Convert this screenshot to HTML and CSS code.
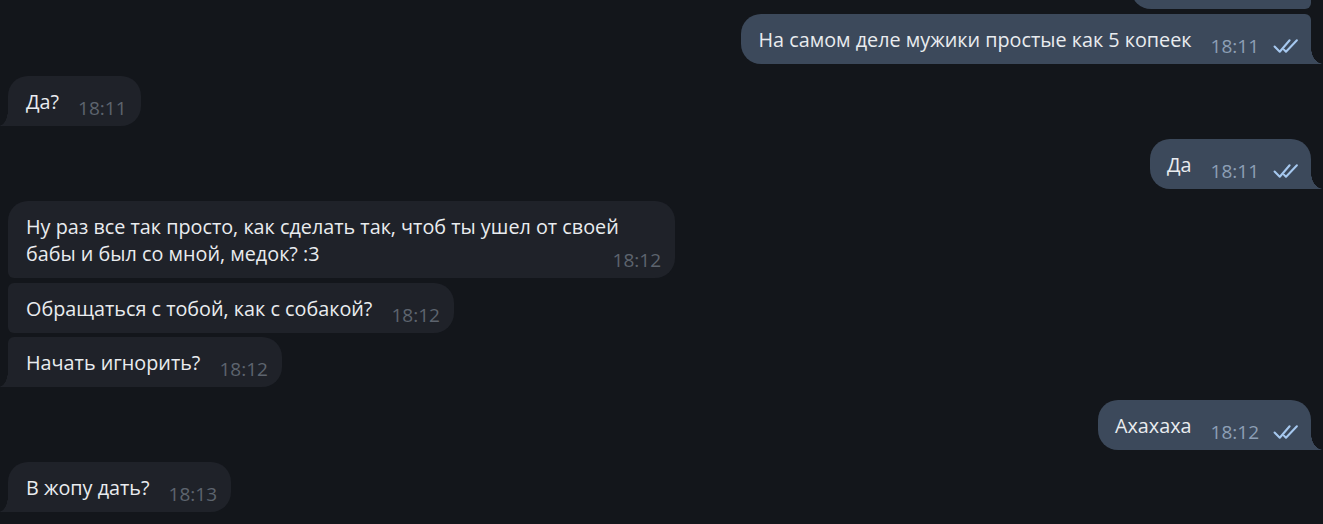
FILE: index.html
```html
<!DOCTYPE html>
<html lang="ru">
<head>
<meta charset="utf-8">
<title>Чат</title>
<link rel="stylesheet" href="styles.css">
</head>
<body>
<div class="chat">
  <div class="group out">
    <div class="bubble cut"></div>
    <div class="bubble"><span class="text">На самом деле мужики простые как 5 копеек</span><span class="meta"><span class="time">18:11</span><svg class="check" viewBox="0 0 26 15"><path d="M1.5 8 L6.5 13 L16 2"/><path d="M10.5 11 L12.5 13 L23 2"/></svg></span></div>
  </div>
  <div class="group in">
    <div class="bubble"><span class="text">Да?</span><span class="meta"><span class="time">18:11</span></span></div>
  </div>
  <div class="group out">
    <div class="bubble"><span class="text">Да</span><span class="meta"><span class="time">18:11</span><svg class="check" viewBox="0 0 26 15"><path d="M1.5 8 L6.5 13 L16 2"/><path d="M10.5 11 L12.5 13 L23 2"/></svg></span></div>
  </div>
  <div class="group in">
    <div class="bubble"><span class="text">Ну раз все так просто, как сделать так, чтоб ты ушел от своей бабы и был со мной, медок? :3</span><span class="meta"><span class="time">18:12</span></span></div>
    <div class="bubble"><span class="text">Обращаться с тобой, как с собакой?</span><span class="meta"><span class="time">18:12</span></span></div>
    <div class="bubble"><span class="text">Начать игнорить?</span><span class="meta"><span class="time">18:12</span></span></div>
  </div>
  <div class="group out">
    <div class="bubble"><span class="text">Ахахаха</span><span class="meta"><span class="time">18:12</span><svg class="check" viewBox="0 0 26 15"><path d="M1.5 8 L6.5 13 L16 2"/><path d="M10.5 11 L12.5 13 L23 2"/></svg></span></div>
  </div>
  <div class="group in">
    <div class="bubble"><span class="text">В жопу дать?</span><span class="meta"><span class="time">18:13</span></span></div>
  </div>
</div>
</body>
</html>
```
FILE: styles.css
```css
html, body {
  margin: 0;
  background: #13161b;
}

.chat {
  height: 524px;
  box-sizing: border-box;
  padding: 0 12px 12px 8px;
  display: flex;
  flex-direction: column;
  justify-content: flex-end;
  gap: 12.5px;
  overflow: hidden;
  font-family: "Open Sans", "Noto Sans", sans-serif;
}

.group {
  display: flex;
  flex-direction: column;
  gap: 4.5px;
}

.group.in { align-items: flex-start; }
.group.out { align-items: flex-end; }

.bubble {
  position: relative;
  display: flow-root;
  box-sizing: border-box;
  max-width: 667px;
  padding: 12px 14px 10px 18px;
  font-size: 19.8px;
  line-height: 27px;
  color: #e9ecef;
}

.in .bubble {
  background: #1f2229;
  border-radius: 6px 20px 20px 6px;
}
.in .bubble:first-child { border-top-left-radius: 20px; }
.in .bubble:last-child { border-bottom-left-radius: 0; }
.in .bubble:last-child::after {
  content: "";
  position: absolute;
  left: -9px;
  bottom: 0;
  width: 9px;
  height: 16px;
  background: radial-gradient(9px 16px at 0 0, transparent 97%, #1f2229 100%);
}

.out .bubble {
  background: #3c495b;
  padding-left: 17px;
  padding-right: 11px;
  border-radius: 20px 6px 6px 20px;
}
.out .bubble:first-child { border-top-right-radius: 20px; }
.out .bubble:last-child { border-bottom-right-radius: 0; }
.out .bubble:last-child::after {
  content: "";
  position: absolute;
  right: -12px;
  bottom: 0;
  width: 12px;
  height: 16px;
  background: radial-gradient(12px 16px at 100% 0, transparent 97%, #3c495b 100%);
}

.bubble.cut {
  width: 180px;
  height: 50px;
}

.meta {
  float: right;
  display: flex;
  align-items: center;
  height: 15px;
  margin: 13px 0 0 19px;
  font-size: 19px;
  line-height: 15px;
}

.in .time { color: #5d646e; }
.out .time { color: #8d9fb5; }

.check {
  width: 27px;
  height: 16px;
  margin-left: 14px;
  fill: none;
  stroke: #a6c8ef;
  stroke-width: 2;
  stroke-linecap: round;
  stroke-linejoin: round;
}
```
